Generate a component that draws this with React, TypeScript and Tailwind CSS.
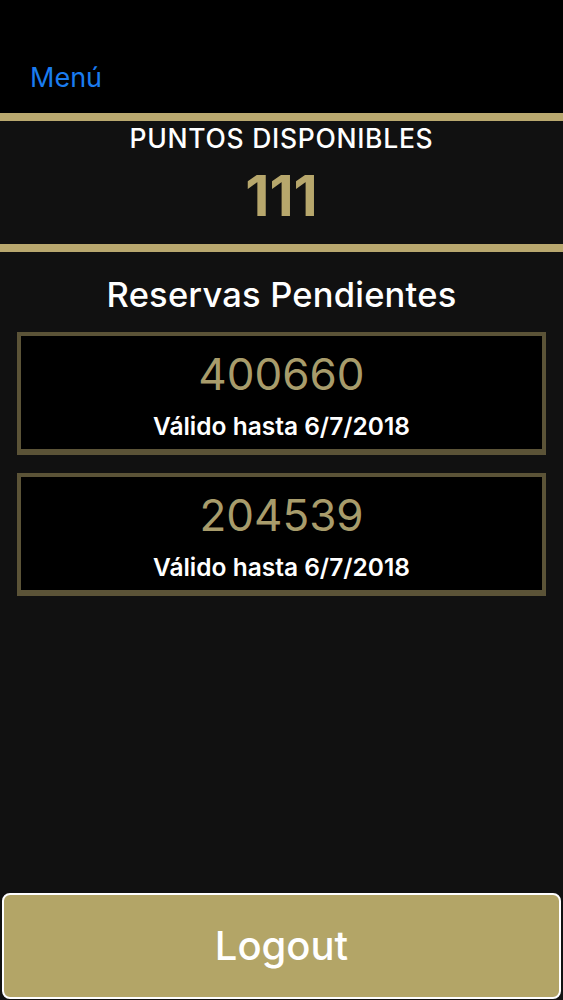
const reservas = [
  { code: "400660", hasta: "6/7/2018" },
  { code: "204539", hasta: "6/7/2018" },
];

export default function App() {
  return (
    <div
      className="flex h-[1000px] w-full flex-col overflow-hidden bg-[#111111] text-white"
      style={{ fontFamily: "Inter, 'Noto Sans', sans-serif" }}
    >
      {/* nav bar */}
      <header className="flex h-[113px] items-end bg-black pb-[22px] pl-[30px]">
        <span className="text-[27px] leading-none text-[#1a7cf0]">Menú</span>
      </header>

      {/* points */}
      <section className="border-y-8 border-[#b9a86f] pb-[24px] pt-[3px] text-center">
        <div className="text-[26.5px] font-medium leading-[28px] tracking-[0.7px]">PUNTOS DISPONIBLES</div>
        <div className="mt-[20px] text-[56px] font-bold leading-[48px] text-[#b7a76c]">111</div>
      </section>

      <h2 className="mt-[24px] text-center text-[34.5px] font-medium leading-[38px] tracking-[0.2px]">Reservas Pendientes</h2>

      <div className="mt-[18px] flex flex-col gap-[18px] px-[17px]">
        {reservas.map((r) => (
          <div
            key={r.code}
            className="flex h-[123px] flex-col items-center border-4 border-b-[6px] border-[#5b5337] bg-black pt-[14px]"
          >
            <span className="text-[44px] leading-[48px] text-[#a89c6b]">{r.code}</span>
            <span className="mt-[15px] text-[24.5px] font-semibold leading-[27px]">Válido hasta {r.hasta}</span>
          </div>
        ))}
      </div>

      <button
        type="button"
        className="mx-[2px] mt-auto mb-[1px] flex h-[106px] items-center justify-center rounded-[8px] border-2 border-white bg-[#b3a567] text-[40px] font-medium text-white"
      >
        Logout
      </button>
    </div>
  );
}
